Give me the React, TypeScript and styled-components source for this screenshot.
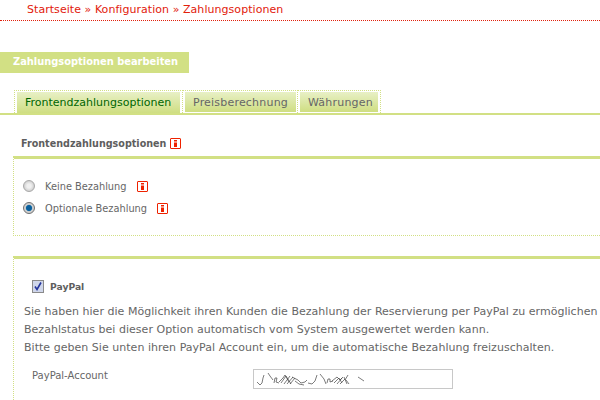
import React from 'react';
import styled, { createGlobalStyle } from 'styled-components';

const Global = createGlobalStyle`
  html, body {
    margin: 0;
    background: #fff;
    width: 600px;
    height: 400px;
    overflow: hidden;
  }
  body {
    font-family: "DejaVu Sans", Verdana, sans-serif;
    font-size: 10px;
    color: #666;
  }
`;

const Page = styled.div`
  width: 600px;
  height: 400px;
  overflow: hidden;
`;

const Crumbs = styled.div`
  height: 21px;
  box-sizing: border-box;
  padding: 3px 0 0 27px;
  border-bottom: 1px dotted #e2200c;
  color: #e2200c;
  font-size: 11px;
  letter-spacing: 0.05px;
  line-height: 14px;
  white-space: nowrap;
`;

const PageTitle = styled.h1`
  margin: 31px 0 0;
  width: 189px;
  height: 21px;
  box-sizing: border-box;
  padding-left: 13px;
  background: #d2e084;
  color: #fff;
  font-size: 9.9px;
  font-weight: bold;
  line-height: 20px;
  white-space: nowrap;
`;

const TabBar = styled.div`
  margin-top: 17px;
  height: 25px;
  box-sizing: border-box;
  padding-left: 14px;
  display: flex;
  align-items: flex-start;
  border-bottom: 2px solid #d2e084;
`;

const Tab = styled.div<{ $active?: boolean; $tight?: boolean }>`
  height: 23px;
  box-sizing: border-box;
  padding: 1px ${p => (p.$tight ? '1px' : '2px')} 0 2px;
  border-top: 1px dotted #d2e084;
  border-right: 1px dotted #d2e084;
  border-left: ${p => (p.$active ? '1px dotted #d2e084' : 'none')};
`;

const TabFace = styled.div<{ $active?: boolean; $width: number }>`
  width: ${p => p.$width}px;
  height: ${p => (p.$active ? '21px' : '20px')};
  box-sizing: border-box;
  padding-left: 8px;
  background: linear-gradient(#e8f0c6, #cfde82);
  color: ${p => (p.$active ? '#006600' : '#666')};
  font-size: 11px;
  letter-spacing: ${p => (p.$active ? '0' : '0.2px')};
  line-height: 21px;
  white-space: nowrap;
`;

const SectionHead = styled.div`
  margin: 20px 0 0 21px;
  height: 16px;
  display: flex;
  align-items: center;
  gap: 4px;
  font-size: 9.6px;
  font-weight: bold;
  color: #5e5e5e;
  white-space: nowrap;
`;

const Panel = styled.section`
  margin-left: 13px;
  border-top: 3px solid #d2e084;
  border-left: 1px dotted #d2e084;
`;

const OptionsPanel = styled(Panel)`
  margin-top: 5px;
  padding-top: 19px;
  height: 57px;
  border-bottom: 1px dotted #d2e084;
  display: flex;
  flex-direction: column;
  gap: 6px;
`;

const OptionRow = styled.label`
  display: flex;
  align-items: center;
  height: 16px;
  padding-left: 9px;
  white-space: nowrap;
`;

const OptionText = styled.span`
  margin-left: 10px;
  margin-right: 10px;
  font-size: 9.8px;
`;

const Radio = styled.span<{ $on?: boolean }>`
  width: 12px;
  height: 12px;
  box-sizing: border-box;
  border-radius: 50%;
  border: 1px solid ${p => (p.$on ? '#6f6f6f' : '#a8a8a8')};
  background: ${p =>
    p.$on
      ? 'radial-gradient(circle at 50% 50%, #0a5f9c 0 2.5px, #3f88b8 3px, #cfcfcf 3.6px)'
      : 'radial-gradient(circle at 50% 50%, #f0f0f0 0 2px, #c6c6c6 6px)'};
`;

const InfoBox = styled.span`
  width: 9px;
  height: 9px;
  border: 1px solid #ee2200;
  border-radius: 1px;
  display: inline-flex;
  align-items: center;
  justify-content: center;
  flex: none;
`;

const PaypalPanel = styled(Panel)`
  margin-top: 20px;
  padding: 20px 0 0 10px;
  height: 121px;
`;

const PaypalHead = styled.div`
  margin-left: 8px;
  display: flex;
  align-items: center;
  gap: 6px;
  height: 14px;
  font-weight: bold;
  font-size: 9.2px;
  color: #5e5e5e;
`;

const CheckBox = styled.span`
  width: 12px;
  height: 13px;
  box-sizing: border-box;
  border: 1px solid #8a8a8a;
  background: #cfd6ea;
  display: flex;
  align-items: center;
  justify-content: center;
`;

const Copy = styled.p`
  margin: 10px 0 0;
  font-size: 11px;
  letter-spacing: 0.03px;
  line-height: 18px;
  white-space: nowrap;
  color: #666;
`;

const FieldRow = styled.div`
  margin: 12px 0 0 8px;
  display: flex;
  align-items: flex-start;
  height: 20px;
`;

const FieldLabel = styled.span`
  width: 221px;
  font-size: 10px;
  line-height: 14px;
`;

const Field = styled.div`
  width: 200px;
  height: 20px;
  box-sizing: border-box;
  border: 1px solid #c8c8c8;
  display: flex;
  align-items: center;
  padding-left: 2px;
`;

function Info() {
  return (
    <InfoBox>
      <svg width="3" height="7" viewBox="0 0 3 7">
        <path d="M0 0h3v1.500H0zM0 2.500h3V7H0z" fill="#ee2200" />
      </svg>
    </InfoBox>
  );
}

function Tabs() {
  return (
    <TabBar>
      <Tab $active>
        <TabFace $active $width={163}>Frontendzahlungsoptionen</TabFace>
      </Tab>
      <Tab $tight>
        <TabFace $width={111}>Preisberechnung</TabFace>
      </Tab>
      <Tab>
        <TabFace $width={78}>Währungen</TabFace>
      </Tab>
    </TabBar>
  );
}

// the account name is scrubbed out in the picture, so it is only scribble
function Scribble() {
  return (
    <svg width="110" height="14" viewBox="0 0 110 14" fill="none" stroke="#444" strokeWidth="0.7">
      <path d="M1 10l3 3 2-2 1-5 1-3M12 1l2 3 3 4M18 11l1-5 2 0-1 4 3 1M23 10l4-4 2-3 4 7M25 11l5-7 5 8M28 12l6-8M31 12l6-7M34 12l5-6M36 5l6 3 3 3 4-1 2-2M39 9l4 3 5 1M52 11l4 1 3-3 2-6" />
      <path d="M64 2l4 5 2 5M71 11l1-4 2 0 0 3 3-1M76 9l5-4 3 3 3-3M78 11l5-5 3 5M81 12l5-6M84 12l5-5M88 5l3 7M92 3l-3 5M90 8l3 4M102 5l6 4" />
    </svg>
  );
}

export default function App() {
  return (
    <Page>
      <Global />
      <Crumbs>Startseite » Konfiguration » Zahlungsoptionen</Crumbs>
      <PageTitle>Zahlungsoptionen bearbeiten</PageTitle>
      <Tabs />
      <SectionHead>
        Frontendzahlungsoptionen <Info />
      </SectionHead>
      <OptionsPanel>
        <OptionRow>
          <Radio />
          <OptionText>Keine Bezahlung</OptionText>
          <Info />
        </OptionRow>
        <OptionRow>
          <Radio $on />
          <OptionText>Optionale Bezahlung</OptionText>
          <Info />
        </OptionRow>
      </OptionsPanel>
      <PaypalPanel>
        <PaypalHead>
          <CheckBox>
            <svg width="10" height="11" viewBox="0 0 10 11" fill="none">
              <path d="M2 5.500l2 3 4-7" stroke="#23349c" strokeWidth="1.600" />
            </svg>
          </CheckBox>
          PayPal
        </PaypalHead>
        <Copy>
          Sie haben hier die Möglichkeit ihren Kunden die Bezahlung der Reservierung per PayPal zu ermöglichen
          <br />
          Bezahlstatus bei dieser Option automatisch vom System ausgewertet werden kann.
          <br />
          Bitte geben Sie unten ihren PayPal Account ein, um die automatische Bezahlung freizuschalten.
        </Copy>
        <FieldRow>
          <FieldLabel>PayPal-Account</FieldLabel>
          <Field>
            <Scribble />
          </Field>
        </FieldRow>
      </PaypalPanel>
    </Page>
  );
}
